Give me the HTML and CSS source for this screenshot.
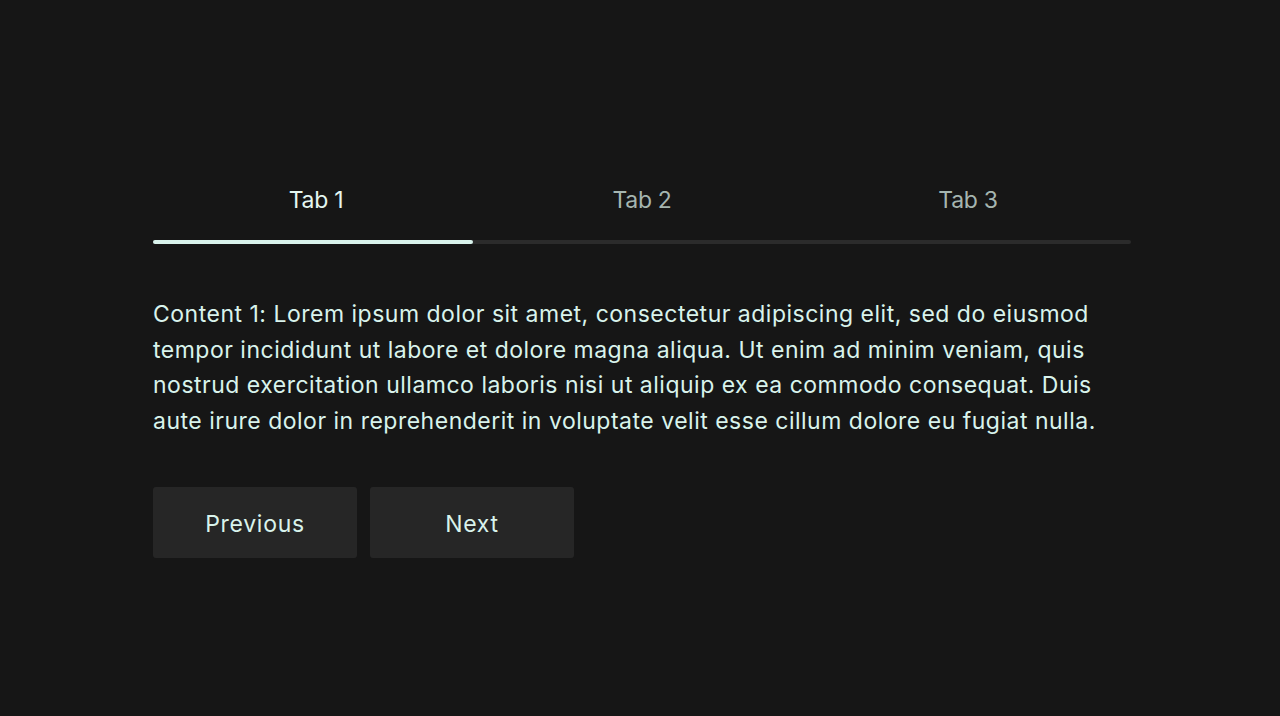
FILE: index.html
```html
<!DOCTYPE html>
<html lang="en">
<head>
<meta charset="utf-8">
<title>Tabs</title>
<link rel="stylesheet" href="styles.css">
</head>
<body>
<main class="tabs">
  <div class="tab-list">
    <button class="tab active">Tab 1</button>
    <button class="tab">Tab 2</button>
    <button class="tab">Tab 3</button>
  </div>
  <div class="track"><div class="indicator"></div></div>
  <p class="content">Content 1: Lorem ipsum dolor sit amet, consectetur adipiscing elit, sed do eiusmod tempor incididunt ut labore et dolore magna aliqua. Ut enim ad minim veniam, quis nostrud exercitation ullamco laboris nisi ut aliquip ex ea commodo consequat. Duis aute irure dolor in reprehenderit in voluptate velit esse cillum dolore eu fugiat nulla.</p>
  <div class="actions">
    <button class="btn">Previous</button>
    <button class="btn">Next</button>
  </div>
</main>
</body>
</html>
```
FILE: styles.css
```css
html, body {
  margin: 0;
  padding: 0;
  background: #161616;
  height: 100%;
}
body {
  font-family: Inter, "Noto Sans", sans-serif;
  color: #d9f3ec;
  padding-left: 4px;
  box-sizing: border-box;
}
.tabs {
  width: 978px;
  margin: 0 auto;
  padding-top: 181px;
}
.tab-list {
  display: grid;
  grid-template-columns: repeat(3, 1fr);
}
.tab {
  background: none;
  border: none;
  font: inherit;
  font-size: 23px;
  line-height: 38px;
  color: #a5b5b0;
  padding: 0;
  letter-spacing: -0.3px;
}
.tab.active {
  color: #e4f7f1;
}
.track {
  margin-top: 21px;
  height: 4px;
  background: #2b2b2b;
  border-radius: 2px;
}
.indicator {
  width: 320px;
  height: 100%;
  background: #d9f3ec;
  border-radius: 2px;
}
.content {
  margin: 53px 0 0;
  font-size: 23px;
  line-height: 35.5px;
  letter-spacing: 0.5px;
  max-width: 965px;
}
.actions {
  display: flex;
  gap: 13px;
  margin-top: 48px;
}
.btn {
  width: 204px;
  height: 71px;
  padding: 3px 0 0;
  background: #262626;
  border: none;
  border-radius: 3px;
  font: inherit;
  font-size: 23px;
  color: #d9f3ec;
  letter-spacing: 0.7px;
}
```
